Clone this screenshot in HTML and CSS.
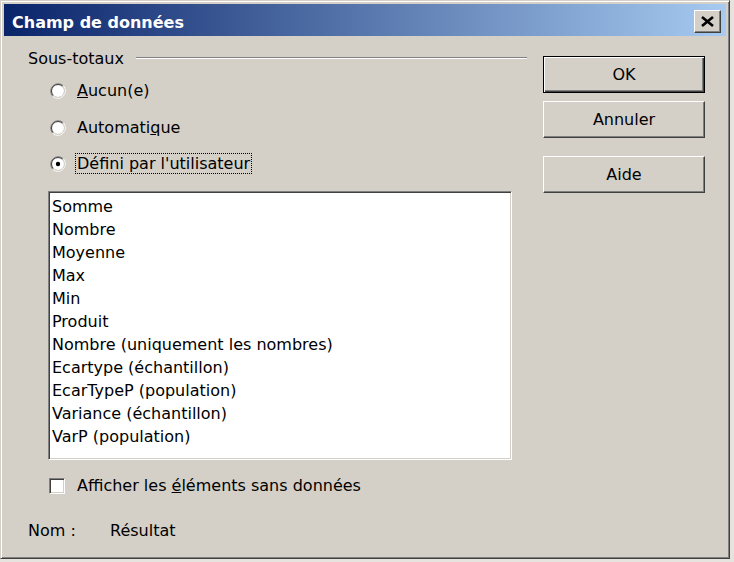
FILE: index.html
```html
<!DOCTYPE html>
<html lang="fr">

<head>
    <meta charset="UTF-8">
    <meta name="viewport" content="width=device-width, initial-scale=1.0">
    <title>Champ de données</title>
    <link rel="stylesheet" href="styles.css">
</head>

<body>
    <div class="window">
        <div class="titlebar">
            <span class="title">Champ de données</span>
            <button class="close-btn">
                <svg width="15" height="11" viewBox="0 0 15 11">
                    <path d="M2 1 L13 10 M13 1 L2 10" stroke="#000" stroke-width="2.6" fill="none" />
                </svg>
            </button>
        </div>

        <div class="dialog-body">
            <div class="main">
                <div class="group-head">
                    <span>Sous-totaux</span>
                    <div class="sep"></div>
                </div>

                <div class="options">
                    <label class="opt">
                        <svg class="radio" width="16" height="16" viewBox="0 0 16 16">
                            <circle cx="8" cy="8" r="6" fill="#fff" />
                            <path d="M2.7 13.3 A7.5 7.5 0 0 1 13.3 2.7" stroke="#808080" fill="none" />
                            <path d="M13.3 2.7 A7.5 7.5 0 0 1 2.7 13.3" stroke="#fff" fill="none" />
                            <path d="M3.4 12.6 A6.5 6.5 0 0 1 12.6 3.4" stroke="#404040" fill="none" />
                            <path d="M12.6 3.4 A6.5 6.5 0 0 1 3.4 12.6" stroke="#d4d0c8" fill="none" />
                        </svg>
                        <span><u>A</u>ucun(e)</span>
                    </label>
                    <label class="opt">
                        <svg class="radio" width="16" height="16" viewBox="0 0 16 16">
                            <circle cx="8" cy="8" r="6" fill="#fff" />
                            <path d="M2.7 13.3 A7.5 7.5 0 0 1 13.3 2.7" stroke="#808080" fill="none" />
                            <path d="M13.3 2.7 A7.5 7.5 0 0 1 2.7 13.3" stroke="#fff" fill="none" />
                            <path d="M3.4 12.6 A6.5 6.5 0 0 1 12.6 3.4" stroke="#404040" fill="none" />
                            <path d="M12.6 3.4 A6.5 6.5 0 0 1 3.4 12.6" stroke="#d4d0c8" fill="none" />
                        </svg>
                        <span>Automati<u>q</u>ue</span>
                    </label>
                    <label class="opt">
                        <svg class="radio" width="16" height="16" viewBox="0 0 16 16">
                            <circle cx="8" cy="8" r="6" fill="#fff" />
                            <path d="M2.7 13.3 A7.5 7.5 0 0 1 13.3 2.7" stroke="#808080" fill="none" />
                            <path d="M13.3 2.7 A7.5 7.5 0 0 1 2.7 13.3" stroke="#fff" fill="none" />
                            <path d="M3.4 12.6 A6.5 6.5 0 0 1 12.6 3.4" stroke="#404040" fill="none" />
                            <path d="M12.6 3.4 A6.5 6.5 0 0 1 3.4 12.6" stroke="#d4d0c8" fill="none" />
                            <circle cx="8" cy="8" r="2.2" fill="#000" />
                        </svg>
                        <span class="focused">Défini par l'utilisateur</span>
                    </label>
                </div>

                <ul class="listbox">
                    <li>Somme</li>
                    <li>Nombre</li>
                    <li>Moyenne</li>
                    <li>Max</li>
                    <li>Min</li>
                    <li>Produit</li>
                    <li>Nombre (uniquement les nombres)</li>
                    <li>Ecartype (échantillon)</li>
                    <li>EcarTypeP (population)</li>
                    <li>Variance (échantillon)</li>
                    <li>VarP (population)</li>
                </ul>

                <label class="check-row">
                    <span class="checkbox"></span>
                    <span>Afficher les <u>é</u>léments sans données</span>
                </label>

                <div class="name-row">
                    <span class="name-label">Nom :</span>
                    <span>Résultat</span>
                </div>
            </div>

            <div class="buttons">
                <button class="btn btn-default">OK</button>
                <button class="btn">Annuler</button>
                <button class="btn btn-help">Aide</button>
            </div>
        </div>
    </div>
</body>

</html>
```

FILE: styles.css
```css
* {
    margin: 0;
    padding: 0;
    box-sizing: border-box;
    list-style: none;
}

body {
    background-color: #e6e3de;
    font-family: "DejaVu Sans", Verdana, sans-serif;
    font-size: 16px;
    line-height: 23px;
    color: #000;
}

.window {
    width: 730px;
    height: 559px;
    background-color: #d4d0c8;
    border: 1px solid;
    border-color: #d4d0c8 #404040 #404040 #d4d0c8;
    box-shadow: inset 1px 1px #fff, inset -1px -1px #808080;
    padding: 3px;
    display: flex;
    flex-direction: column;
}

.titlebar {
    height: 32px;
    display: flex;
    align-items: center;
    justify-content: space-between;
    padding: 0 5px 0 8px;
    background: linear-gradient(to right, #0a246a, #a6caf0);
}

.title {
    color: white;
    font-weight: bold;
    margin-top: 4px;
}

.close-btn {
    width: 27px;
    height: 23px;
    margin-top: 2px;
    display: flex;
    align-items: center;
    justify-content: center;
    background-color: #d4d0c8;
    border: 1px solid;
    border-color: #fff #404040 #404040 #fff;
    box-shadow: inset -1px -1px #808080;
}

.dialog-body {
    flex: 1;
    display: flex;
}

.main {
    width: 523px;
    padding-left: 24px;
}

.group-head {
    margin-top: 11px;
    display: flex;
    align-items: center;
    gap: 12px;
}

.sep {
    flex: 1;
    height: 2px;
    margin-top: -2px;
    border-top: 1px solid #808080;
    border-bottom: 1px solid #fff;
}

.options {
    margin-top: 9px;
    padding-left: 22px;
    display: flex;
    flex-direction: column;
    gap: 14px;
}

.opt {
    display: flex;
    align-items: center;
    gap: 11px;
}

.focused {
    border: 1px dotted #000;
    padding: 0 1px;
    margin-left: -2px;
    line-height: 19px;
}

.listbox {
    margin: 17px 0 0 20px;
    width: 464px;
    height: 269px;
    padding: 3px 3px;
    background-color: white;
    border: 1px solid;
    border-color: #808080 #fff #fff #808080;
    box-shadow: inset 1px 1px #404040, inset -1px -1px #d4d0c8;
}

.check-row {
    margin-top: 14px;
    padding-left: 21px;
    display: flex;
    align-items: center;
    gap: 12px;
}

.checkbox {
    width: 16px;
    height: 16px;
    background-color: white;
    border: 1px solid;
    border-color: #808080 #fff #fff #808080;
    box-shadow: inset 1px 1px #404040, inset -1px -1px #d4d0c8;
}

.name-row {
    margin-top: 22px;
    display: flex;
}

.name-label {
    width: 82px;
}

.buttons {
    margin-left: 16px;
    padding-top: 20px;
    display: flex;
    flex-direction: column;
    gap: 8px;
}

.btn {
    width: 162px;
    height: 37px;
    font-family: inherit;
    font-size: 16px;
    color: #000;
    background-color: #d4d0c8;
    border: 1px solid;
    border-color: #fff #404040 #404040 #fff;
    box-shadow: inset -1px -1px #808080;
}

.btn-default {
    border: 1px solid #000;
    box-shadow: inset 1px 1px #fff, inset -1px -1px #404040, inset -2px -2px #808080;
}

.btn-help {
    margin-top: 10px;
}
```
